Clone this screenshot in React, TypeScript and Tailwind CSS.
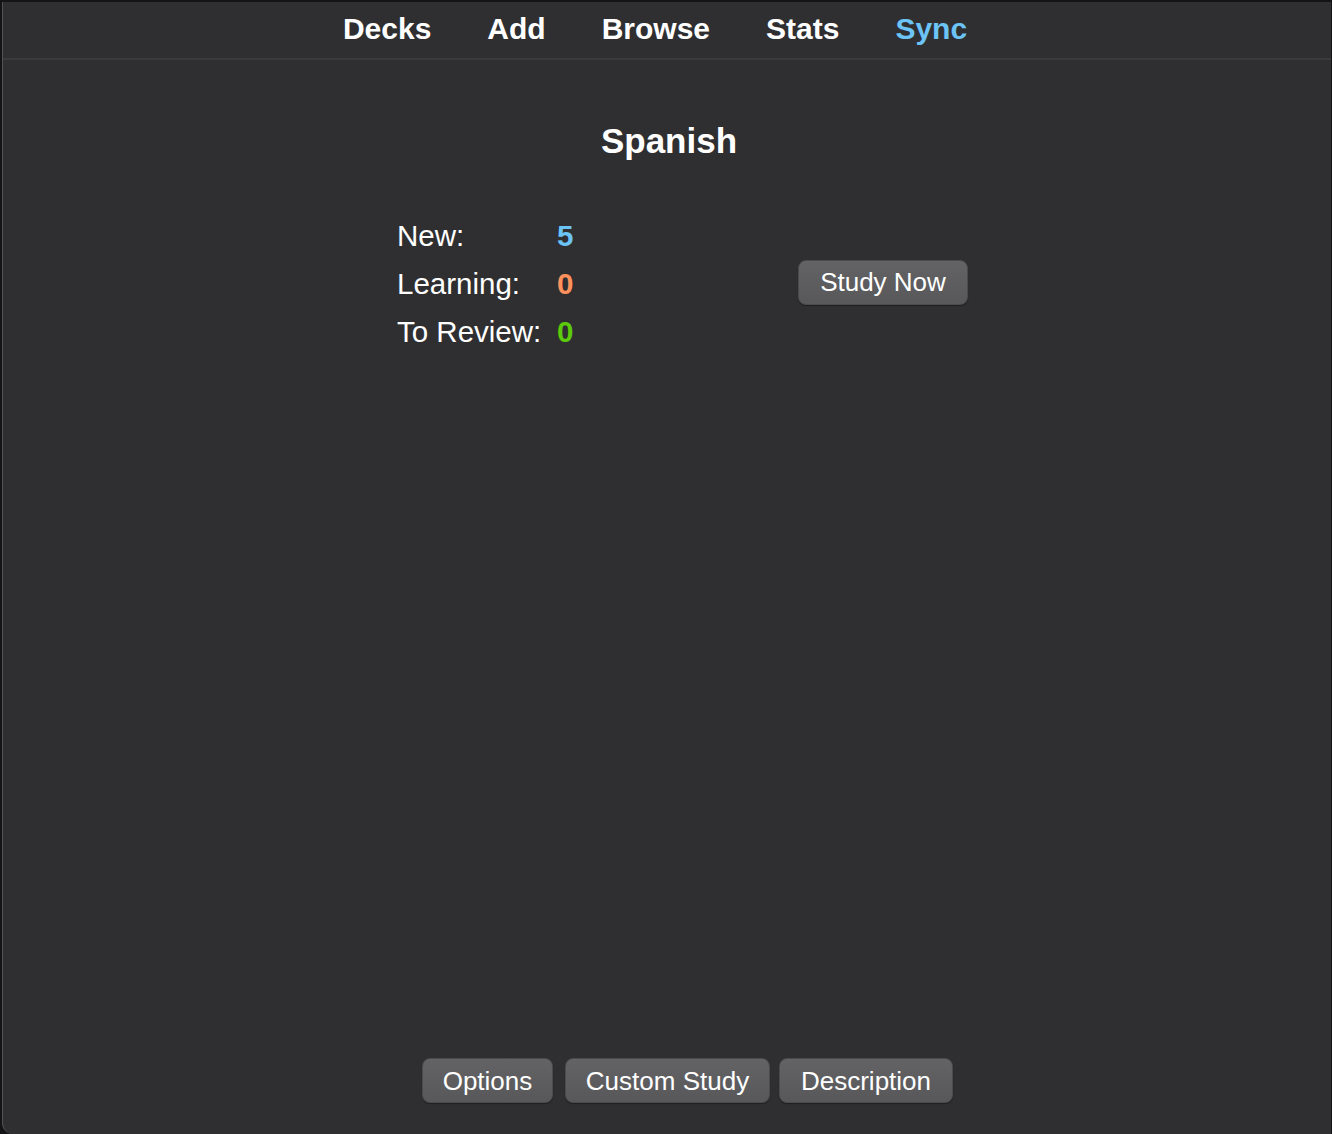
import React from "react";

const navItems = [
  { label: "Decks", active: false },
  { label: "Add", active: false },
  { label: "Browse", active: false },
  { label: "Stats", active: false },
  { label: "Sync", active: true },
];

function Btn({ children, className = "" }: { children: React.ReactNode; className?: string }) {
  return (
    <button
      className={
        "h-[45px] rounded-[8px] border border-[#4b4b4d] bg-gradient-to-b from-[#636365] to-[#58585a] text-[26px] leading-none text-white shadow-[0_1px_1px_rgba(0,0,0,0.35)] " +
        className
      }
    >
      {children}
    </button>
  );
}

export default function App() {
  return (
    <div
      className="h-[1134px] w-[1332px] overflow-hidden bg-[#141416] pl-[2px] pt-[2px] pr-[1px]"
      style={{ fontFamily: '"Liberation Sans", Arial, Helvetica, sans-serif' }}
    >
      <div className="flex h-full flex-col rounded-bl-[11px] border-l border-[#525254] bg-[#2f2f31]">
        {/* nav */}
        <div className="flex h-[58px] shrink-0 items-center justify-center gap-[56px] border-b-2 border-[#3b3b3d] pr-[24px] pb-[2px]">
          {navItems.map((n) => (
            <span
              key={n.label}
              className={
                "text-[30px] font-bold leading-none " + (n.active ? "text-[#6cc3f6]" : "text-white")
              }
            >
              {n.label}
            </span>
          ))}
        </div>

        {/* title */}
        <div className="mt-[61px] flex justify-center pl-[4px]">
          <h1 className="text-[35px] font-bold leading-[40px] text-white">Spanish</h1>
        </div>

        {/* stats */}
        <div className="mt-[51px] flex justify-center pl-[31px]">
          <div className="flex w-[571px] items-center justify-between">
            <div className="flex flex-col text-[29.5px] text-white">
              <div className="flex h-[48px] items-center">
                <span className="w-[160px]">New:</span>
                <span className="font-bold text-[#6cc3f6]">5</span>
              </div>
              <div className="flex h-[48px] items-center">
                <span className="w-[160px]">Learning:</span>
                <span className="font-bold text-[#ff925c]">0</span>
              </div>
              <div className="flex h-[48px] items-center">
                <span className="w-[160px]">To Review:</span>
                <span className="font-bold text-[#5ccb0c]">0</span>
              </div>
            </div>
            <Btn className="mb-[4px] w-[170px]">Study Now</Btn>
          </div>
        </div>

        <div className="flex-1" />

        {/* bottom buttons */}
        <div className="mb-[31px] flex justify-center pl-[41px]">
          <Btn className="w-[131px]">Options</Btn>
          <Btn className="ml-[12px] w-[205px]">Custom Study</Btn>
          <Btn className="ml-[9px] w-[174px]">Description</Btn>
        </div>
      </div>
    </div>
  );
}
